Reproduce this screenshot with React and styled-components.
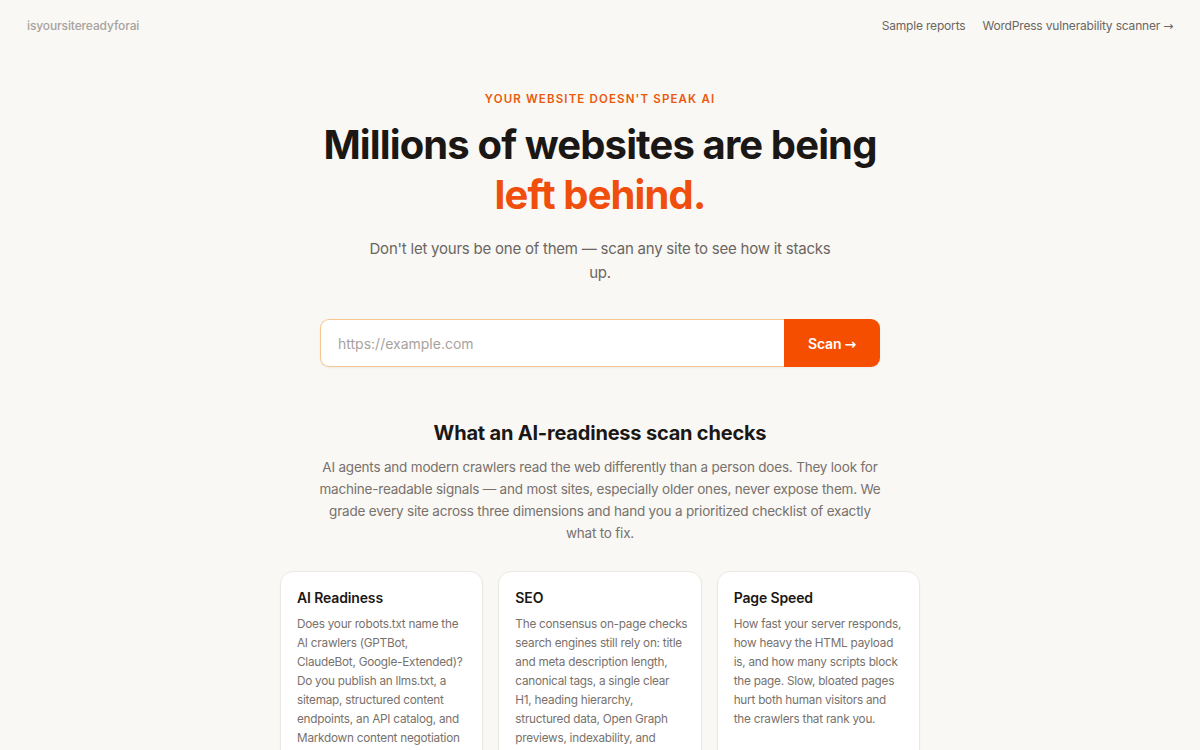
import React from "react";
import styled, { createGlobalStyle } from "styled-components";

const Global = createGlobalStyle`
  * { box-sizing: border-box; }
  html, body { margin: 0; padding: 0; background: #f9f8f5; }
  body {
    font-family: Inter, "Noto Sans", "Liberation Sans", sans-serif;
    color: #1c1917;
    -webkit-font-smoothing: antialiased;
  }
`;

const Page = styled.div`
  min-height: 750px;
  display: flex;
  flex-direction: column;
`;

const Nav = styled.header`
  display: flex;
  align-items: center;
  justify-content: space-between;
  height: 50px;
  padding: 0 27px;
`;

const Logo = styled.a`
  font-size: 12px;
  font-weight: 500;
  color: #a8a29e;
  letter-spacing: -0.01em;
  text-decoration: none;
`;

const NavLinks = styled.nav`
  display: flex;
  gap: 17px;
`;

const NavLink = styled.a`
  font-size: 12px;
  color: #6b6661;
  text-decoration: none;
  letter-spacing: -0.015em;
`;

const Arrow = styled.span`
  font-family: "DejaVu Sans", sans-serif;
  font-weight: ${(p) => (p.$bold ? 700 : 400)};
  margin-left: 3px;
`;

const Hero = styled.section`
  display: flex;
  flex-direction: column;
  align-items: center;
  text-align: center;
  padding-top: 40px;
`;

const Eyebrow = styled.p`
  margin: 0;
  font-size: 11.5px;
  font-weight: 600;
  letter-spacing: 0.1em;
  color: #ea580c;
  line-height: 18px;
`;

const Title = styled.h1`
  margin: 12px 0 0;
  font-size: 40px;
  font-weight: 700;
  line-height: 50px;
  letter-spacing: -0.022em;
  color: #1a1715;
`;

const Accent = styled.span`
  color: #f04e0c;
`;

const Lead = styled.p`
  margin: 17px 0 0;
  max-width: 470px;
  font-size: 15px;
  line-height: 24px;
  letter-spacing: -0.015em;
  color: #6b6661;
`;

const ScanForm = styled.form`
  margin-top: 34px;
  width: 560px;
  height: 48px;
  display: flex;
  border-radius: 9px;
  box-shadow: 0 1px 3px rgba(0, 0, 0, 0.05);
`;

const UrlInput = styled.input`
  flex: 1;
  min-width: 0;
  height: 100%;
  border: 1px solid #f7c690;
  border-right: none;
  border-radius: 9px 0 0 9px;
  background: #fff;
  padding: 0 17px;
  font-family: inherit;
  font-size: 14px;
  color: #1c1917;
  outline: none;
  &::placeholder { color: #a8a29e; }
`;

const ScanButton = styled.button`
  width: 96px;
  height: 100%;
  border: none;
  border-radius: 0 9px 9px 0;
  background: #f54e00;
  color: #fff;
  font-family: inherit;
  font-size: 14px;
  font-weight: 600;
  letter-spacing: -0.01em;
  cursor: pointer;
`;

const Checks = styled.section`
  margin-top: 52px;
  display: flex;
  flex-direction: column;
  align-items: center;
  text-align: center;
`;

const ChecksTitle = styled.h2`
  margin: 0;
  font-size: 20px;
  font-weight: 700;
  line-height: 28px;
  letter-spacing: -0.01em;
  color: #1a1715;
`;

const ChecksText = styled.p`
  margin: 9px 0 0;
  max-width: 566px;
  font-size: 13.5px;
  line-height: 22px;
  letter-spacing: -0.015em;
  color: #78716c;
`;

const CardGrid = styled.div`
  margin-top: 27px;
  width: 640px;
  display: grid;
  grid-template-columns: repeat(3, 1fr);
  gap: 15px;
  text-align: left;
`;

const Card = styled.article`
  background: #fff;
  border: 1px solid #ebe8e4;
  border-radius: 13px;
  padding: 16px 13px 20px 16px;
  min-height: 200px;
  box-shadow: 0 1px 2px rgba(0, 0, 0, 0.03);
`;

const CardTitle = styled.h3`
  margin: 0;
  font-size: 14px;
  font-weight: 600;
  line-height: 20px;
  letter-spacing: -0.01em;
  color: #1a1715;
`;

const CardText = styled.p`
  margin: 7px 0 0;
  font-size: 11.75px;
  line-height: 19px;
  letter-spacing: -0.02em;
  color: #78716c;
`;

const cards = [
  {
    title: "AI Readiness",
    text: "Does your robots.txt name the AI crawlers (GPTBot, ClaudeBot, Google-Extended)? Do you publish an llms.txt, a sitemap, structured content endpoints, an API catalog, and Markdown content negotiation for agents that prefer clean text?",
  },
  {
    title: "SEO",
    text: "The consensus on-page checks search engines still rely on: title and meta description length, canonical tags, a single clear H1, heading hierarchy, structured data, Open Graph previews, indexability, and image alt text.",
  },
  {
    title: "Page Speed",
    text: "How fast your server responds, how heavy the HTML payload is, and how many scripts block the page. Slow, bloated pages hurt both human visitors and the crawlers that rank you.",
  },
];

export default function App() {
  return (
    <Page>
      <Global />
      <Nav>
        <Logo href="#">isyoursitereadyforai</Logo>
        <NavLinks>
          <NavLink href="#">Sample reports</NavLink>
          <NavLink href="#">
            WordPress vulnerability scanner<Arrow>→</Arrow>
          </NavLink>
        </NavLinks>
      </Nav>
      <Hero>
        <Eyebrow>YOUR WEBSITE DOESN'T SPEAK AI</Eyebrow>
        <Title>
          Millions of websites are being
          <br />
          <Accent>left behind.</Accent>
        </Title>
        <Lead>
          Don't let yours be one of them — scan any site to see how it stacks up.
        </Lead>
        <ScanForm onSubmit={(e) => e.preventDefault()}>
          <UrlInput type="text" placeholder="https://example.com" />
          <ScanButton type="submit">
            Scan<Arrow $bold>→</Arrow>
          </ScanButton>
        </ScanForm>
      </Hero>
      <Checks>
        <ChecksTitle>What an AI-readiness scan checks</ChecksTitle>
        <ChecksText>
          AI agents and modern crawlers read the web differently than a person does. They look for
          machine-readable signals — and most sites, especially older ones, never expose them. We
          grade every site across three dimensions and hand you a prioritized checklist of exactly
          what to fix.
        </ChecksText>
        <CardGrid>
          {cards.map((c) => (
            <Card key={c.title}>
              <CardTitle>{c.title}</CardTitle>
              <CardText>{c.text}</CardText>
            </Card>
          ))}
        </CardGrid>
      </Checks>
    </Page>
  );
}
